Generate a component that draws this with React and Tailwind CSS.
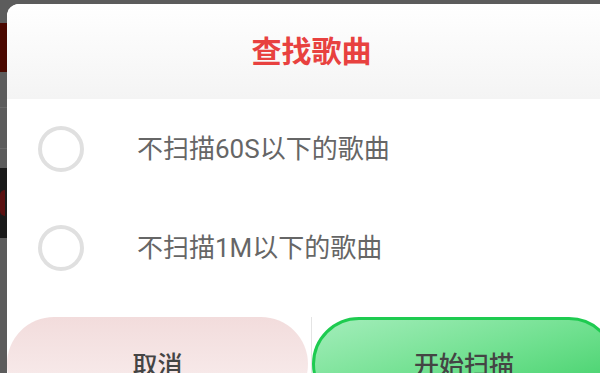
import React from 'react';

const font = { fontFamily: 'Roboto, "Noto Sans CJK SC", sans-serif' };

const options = ['不扫描60S以下的歌曲', '不扫描1M以下的歌曲'];

const Radio = () => (
  <span className="h-[46px] w-[46px] shrink-0 rounded-full border-[4px] border-[#e0e0e0] bg-white" />
);

export default function App() {
  return (
    <div className="relative h-[373px] w-[600px] overflow-hidden bg-[#5c5c5c]" style={font}>
      {/* page behind the dialog */}
      <div className="flex w-[7px] flex-col">
        <div className="h-[23px]" />
        <div className="h-[49px] bg-[#4a0800]" />
        <div className="h-[35px]" />
        <div className="h-px bg-[#6a6a6a]" />
        <div className="h-[40px]" />
        <div className="h-px bg-[#6a6a6a]" />
        <div className="h-[19px]" />
        <div className="flex h-[70px] items-center bg-[#1a1a1a]">
          <div className="h-[26px] w-[5px] rounded-l-full bg-[#5a1010]" />
        </div>
      </div>

      {/* dialog */}
      <div className="absolute left-[7px] top-[4px] flex h-[420px] w-[609px] flex-col overflow-hidden rounded-t-[12px] bg-white">
        <div className="flex h-[95px] shrink-0 items-center justify-center bg-gradient-to-b from-white to-[#f4f4f4]">
          <h1 className="text-[30px] font-bold leading-none text-[#e8413f]">查找歌曲</h1>
        </div>

        {options.map((label) => (
          <div key={label} className="flex h-[99px] shrink-0 items-center pl-[31px]">
            <Radio />
            <span className="ml-[53px] text-[26px] leading-none text-[#666666]">{label}</span>
          </div>
        ))}

        <div className="mt-[20px] flex h-[94px] shrink-0 items-stretch">
          <button className="flex w-[301px] items-center justify-center rounded-full bg-gradient-to-b from-[#f2dcdc] to-[#faf1f1] pt-[4px] text-[25px] font-medium text-[#444444]">
            取消
          </button>
          <div className="ml-[3px] w-px bg-[#e4e4e4]" />
          <button className="flex w-[304px] items-center justify-center rounded-full border-[3px] border-[#1ecb50] bg-gradient-to-br from-[#a2edba] via-[#6fe08f] to-[#2fcd60] pt-[4px] text-[25px] font-medium text-[#444444]">
            开始扫描
          </button>
        </div>
      </div>
    </div>
  );
}
